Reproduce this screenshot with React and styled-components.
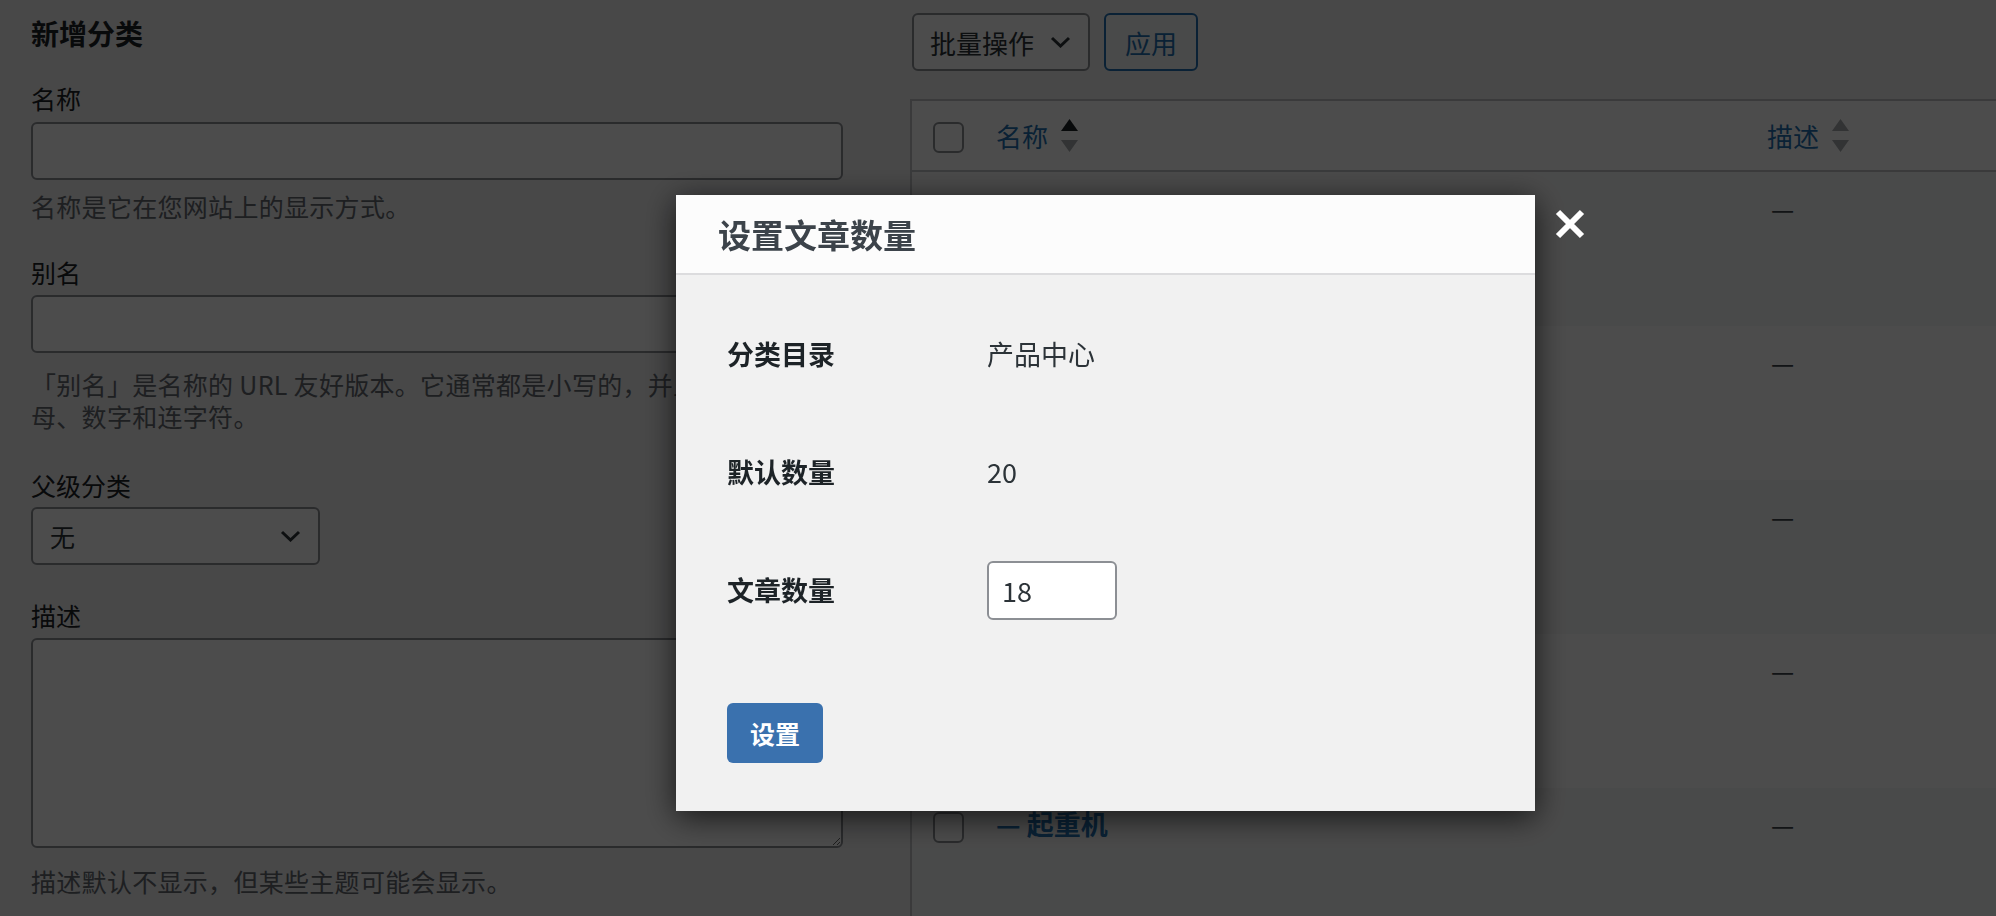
import styled, { createGlobalStyle } from "styled-components";

const GlobalStyle = createGlobalStyle`
  html, body {
    margin: 0;
    padding: 0;
  }
  body {
    width: 1996px;
    height: 916px;
    overflow: hidden;
    background: #f0f0f1;
    color: #1d2327;
    font-family: "Noto Sans CJK SC", "Noto Sans", sans-serif;
  }
  * {
    box-sizing: border-box;
  }
`;

// Page behind the dialog
const Page = styled.div`
  display: flex;
  align-items: flex-start;
  height: 916px;
  padding: 13px 0 0 31px;
`;

const FormColumn = styled.div`
  width: 812px;
  flex-shrink: 0;
`;

const Title = styled.h2`
  margin: 2px 0 0;
  font-size: 28px;
  line-height: 36px;
  font-weight: 700;
  color: #1d2327;
`;

const Field = styled.div`
  margin-top: ${(p) => p.$gap}px;
`;

const Label = styled.label`
  display: block;
  font-size: 25px;
  line-height: 32px;
  color: #1d2327;
`;

const TextInput = styled.input`
  display: block;
  width: 100%;
  height: 58px;
  margin-top: ${(p) => p.$gap}px;
  border: 2px solid #8c8f94;
  border-radius: 6px;
  background: #fff;
  outline: none;
`;

const TextArea = styled.textarea`
  display: block;
  width: 100%;
  height: 210px;
  margin-top: 7px;
  border: 2px solid #8c8f94;
  border-radius: 6px;
  background: #fff;
  outline: none;
`;

const Help = styled.p`
  margin: ${(p) => p.$gap}px 0 0;
  font-size: 25px;
  line-height: 32px;
  color: #646970;
  letter-spacing: 0.3px;
  white-space: nowrap;
`;

const SelectBox = styled.div`
  display: flex;
  align-items: center;
  justify-content: space-between;
  width: ${(p) => p.$width}px;
  height: 58px;
  margin-top: ${(p) => p.$gap || 0}px;
  padding: 0 17px 0 ${(p) => p.$padLeft}px;
  border: 2px solid #8c8f94;
  border-radius: 6px;
  background: #fff;
  font-size: ${(p) => p.$size}px;
  color: #2c3338;
`;

const Chevron = () => (
  <svg width="21" height="12" viewBox="0 0 21 12">
    <path d="M2 2 L10.5 10 L19 2" fill="none" stroke="#2c3338" strokeWidth="3" />
  </svg>
);

const ListColumn = styled.div`
  width: 1300px;
  margin-left: 67px;
  flex-shrink: 0;
`;

const TableNav = styled.div`
  display: flex;
  gap: 14px;
  padding-left: 2px;
`;

const SecondaryButton = styled.button`
  width: 94px;
  height: 58px;
  border: 2px solid #2271b1;
  border-radius: 6px;
  background: #f6f7f7;
  color: #2271b1;
  font-family: inherit;
  font-size: 26px;
`;

const Table = styled.div`
  margin-top: 28px;
  border: 2px solid #c3c4c7;
  background: #fff;
`;

const Row = styled.div`
  display: grid;
  grid-template-columns: 84px 771px 1fr;
  height: ${(p) => (p.$head ? 71 : 154)}px;
  align-items: ${(p) => (p.$head ? "center" : "start")};
  padding-top: ${(p) => (p.$head ? 0 : 20)}px;
  border-bottom: ${(p) => (p.$head ? "2px solid #c3c4c7" : "none")};
  background: ${(p) => (p.$striped ? "#f6f7f7" : "#fff")};
  font-size: 26px;
  line-height: 32px;
`;

const CheckCell = styled.div`
  padding-left: 21px;
  padding-top: ${(p) => (p.$head ? 3 : 4)}px;
`;

const Checkbox = styled.span`
  display: block;
  width: 31px;
  height: 31px;
  border: 2px solid #8c8f94;
  border-radius: 6px;
  background: #fff;
`;

const SortLink = styled.span`
  display: flex;
  align-items: center;
  gap: 13px;
  color: #2271b1;
`;

const RowTitle = styled.span`
  color: #2271b1;
  font-size: 27px;
  font-weight: 700;
`;

const Dash = styled.span`
  padding-left: 4px;
  color: #3c434a;
`;

const SortArrows = ({ active }) => (
  <svg width="17" height="33" viewBox="0 0 17 33">
    <polygon points="0,12 8.5,0 17,12" fill={active ? "#1d2327" : "#a7aaad"} />
    <polygon points="0,21 17,21 8.5,33" fill="#a7aaad" />
  </svg>
);

// Dialog layer
const Overlay = styled.div`
  position: fixed;
  inset: 0;
  background: rgba(0, 0, 0, 0.7);
`;

const Modal = styled.div`
  position: fixed;
  left: 676px;
  top: 195px;
  width: 859px;
  height: 616px;
  display: flex;
  flex-direction: column;
  background: #f1f1f1;
  box-shadow: 0 6px 30px rgba(0, 0, 0, 0.7);
`;

const ModalHeader = styled.div`
  display: flex;
  align-items: center;
  height: 80px;
  padding-left: 42px;
  background: #fcfcfc;
  border-bottom: 2px solid #dcdcde;
`;

const ModalTitle = styled.h1`
  margin: 0;
  font-size: 33px;
  line-height: 40px;
  font-weight: 700;
  color: #3c434a;
`;

const ModalBody = styled.div`
  flex: 1;
  padding: 20px 0 0 51px;
`;

const InfoGrid = styled.div`
  display: grid;
  grid-template-columns: 260px auto;
  grid-auto-rows: 118px;
  align-items: center;
  font-size: 27px;
  line-height: 34px;
`;

const InfoLabel = styled.div`
  font-weight: 700;
  color: #1d2327;
`;

const InfoValue = styled.div`
  color: #2c3338;
`;

const NumberInput = styled.input`
  width: 130px;
  height: 59px;
  padding: 0 0 0 13px;
  border: 2px solid #8c8f94;
  border-radius: 6px;
  background: #fff;
  color: #2c3338;
  font-family: inherit;
  font-size: 27px;
  outline: none;
`;

const PrimaryButton = styled.button`
  width: 96px;
  height: 60px;
  margin-top: 54px;
  border: none;
  border-radius: 6px;
  background: #3a71ae;
  color: #fff;
  font-family: inherit;
  font-size: 25px;
  font-weight: 700;
`;

const CloseButton = styled.button`
  position: fixed;
  left: 1554px;
  top: 208px;
  width: 32px;
  height: 32px;
  padding: 0;
  border: none;
  background: none;
`;

// rows 1-4 sit fully under the dialog, only the last title shows
const rows = [
  { id: 1, name: "" },
  { id: 2, name: "" },
  { id: 3, name: "" },
  { id: 4, name: "" },
  { id: 5, name: "— 起重机" },
];

const App = () => {
  return (
    <>
      <GlobalStyle />
      <Page>
        <FormColumn>
          <Title>新增分类</Title>
          <Field $gap={31}>
            <Label>名称</Label>
            <TextInput $gap={8} />
            <Help $gap={10}>名称是它在您网站上的显示方式。</Help>
          </Field>
          <Field $gap={34}>
            <Label>别名</Label>
            <TextInput $gap={7} />
            <Help $gap={15}>
              「别名」是名称的 URL 友好版本。它通常都是小写的，并且只能包含字
              <br />
              母、数字和连字符。
            </Help>
          </Field>
          <Field $gap={37}>
            <Label>父级分类</Label>
            <SelectBox $width={289} $gap={6} $padLeft={17} $size={25}>
              无
              <Chevron />
            </SelectBox>
          </Field>
          <Field $gap={34}>
            <Label>描述</Label>
            <TextArea />
            <Help $gap={17}>描述默认不显示，但某些主题可能会显示。</Help>
          </Field>
        </FormColumn>

        <ListColumn>
          <TableNav>
            <SelectBox $width={178} $padLeft={16} $size={26}>
              批量操作
              <Chevron />
            </SelectBox>
            <SecondaryButton>应用</SecondaryButton>
          </TableNav>
          <Table>
            <Row $head>
              <CheckCell $head>
                <Checkbox />
              </CheckCell>
              <SortLink>
                名称
                <SortArrows active />
              </SortLink>
              <SortLink>
                描述
                <SortArrows />
              </SortLink>
            </Row>
            {rows.map((r, i) => (
              <Row key={r.id} $striped={i % 2 === 0}>
                <CheckCell>
                  <Checkbox />
                </CheckCell>
                <RowTitle>{r.name}</RowTitle>
                <Dash>—</Dash>
              </Row>
            ))}
          </Table>
        </ListColumn>
      </Page>

      <Overlay />
      <Modal>
        <ModalHeader>
          <ModalTitle>设置文章数量</ModalTitle>
        </ModalHeader>
        <ModalBody>
          <InfoGrid>
            <InfoLabel>分类目录</InfoLabel>
            <InfoValue>产品中心</InfoValue>
            <InfoLabel>默认数量</InfoLabel>
            <InfoValue>20</InfoValue>
            <InfoLabel>文章数量</InfoLabel>
            <div>
              <NumberInput type="text" defaultValue="18" />
            </div>
          </InfoGrid>
          <PrimaryButton>设置</PrimaryButton>
        </ModalBody>
      </Modal>
      <CloseButton aria-label="关闭">
        <svg width="32" height="32" viewBox="0 0 32 32">
          <path d="M4 4 L28 28 M28 4 L4 28" stroke="#fff" strokeWidth="6" />
        </svg>
      </CloseButton>
    </>
  );
};

export default App;
